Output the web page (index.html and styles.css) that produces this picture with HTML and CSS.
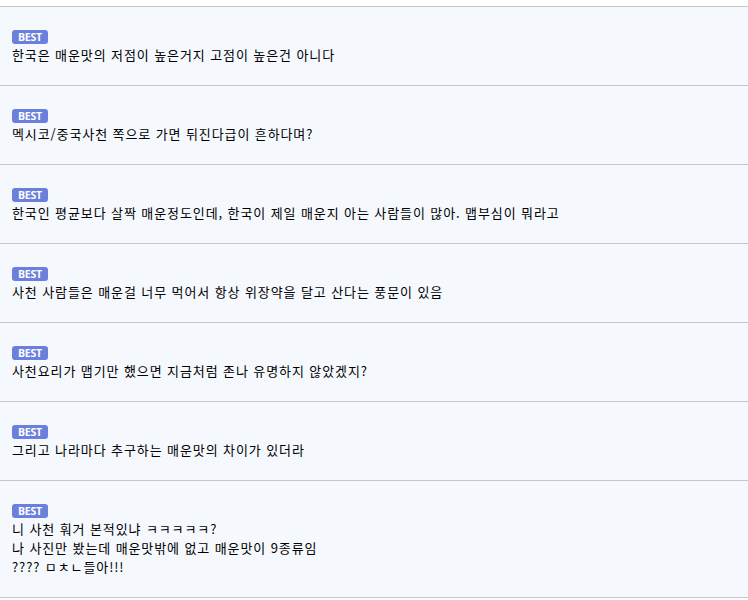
FILE: index.html
```html
<!DOCTYPE html>
<html lang="ko">
<head>
<meta charset="utf-8">
<link rel="stylesheet" href="styles.css">
</head>
<body>
<ul class="list">
  <li class="item"><span class="badge">BEST</span><p class="text">한국은 매운맛의 저점이 높은거지 고점이 높은건 아니다</p></li>
  <li class="item"><span class="badge">BEST</span><p class="text">멕시코/중국사천 쪽으로 가면 뒤진다급이 흔하다며?</p></li>
  <li class="item"><span class="badge">BEST</span><p class="text">한국인 평균보다 살짝 매운정도인데, 한국이 제일 매운지 아는 사람들이 많아. 맵부심이 뭐라고</p></li>
  <li class="item"><span class="badge">BEST</span><p class="text">사천 사람들은 매운걸 너무 먹어서 항상 위장약을 달고 산다는 풍문이 있음</p></li>
  <li class="item"><span class="badge">BEST</span><p class="text">사천요리가 맵기만 했으면 지금처럼 존나 유명하지 않았겠지?</p></li>
  <li class="item"><span class="badge">BEST</span><p class="text">그리고 나라마다 추구하는 매운맛의 차이가 있더라</p></li>
  <li class="item"><span class="badge">BEST</span><p class="text">니 사천 훠거 본적있냐 ㅋㅋㅋㅋㅋ?<br>나 사진만 봤는데 매운맛밖에 없고 매운맛이 9종류임<br>???? ㅁㅊㄴ들아!!!</p></li>
</ul>
</body>
</html>
```
FILE: styles.css
```css
html, body {
  margin: 0;
  padding: 0;
  background: #ffffff;
}
body {
  padding-top: 6px;
  font-family: "Noto Sans CJK KR", "Noto Sans", sans-serif;
  color: #000;
}
.list {
  list-style: none;
  margin: 0;
  padding: 0;
  border-top: 1px solid #c6c6c6;
}
.item {
  background: #f5f8fd;
  border-bottom: 1px solid #c6c6c6;
  padding: 23px 12px 21px;
  display: flex;
  flex-direction: column;
  align-items: flex-start;
  gap: 1px;
}
.badge {
  display: block;
  background: #6b80dc;
  color: #fff;
  font-family: "Open Sans", "DejaVu Sans", sans-serif;
  font-weight: 700;
  font-size: 10.5px;
  line-height: 14px;
  height: 14px;
  padding: 0 6px;
  border-radius: 3px;
  letter-spacing: -0.2px;
}
.text {
  margin: 0;
  font-size: 13px;
  line-height: 19px;
  letter-spacing: 0.9px;
}
```
